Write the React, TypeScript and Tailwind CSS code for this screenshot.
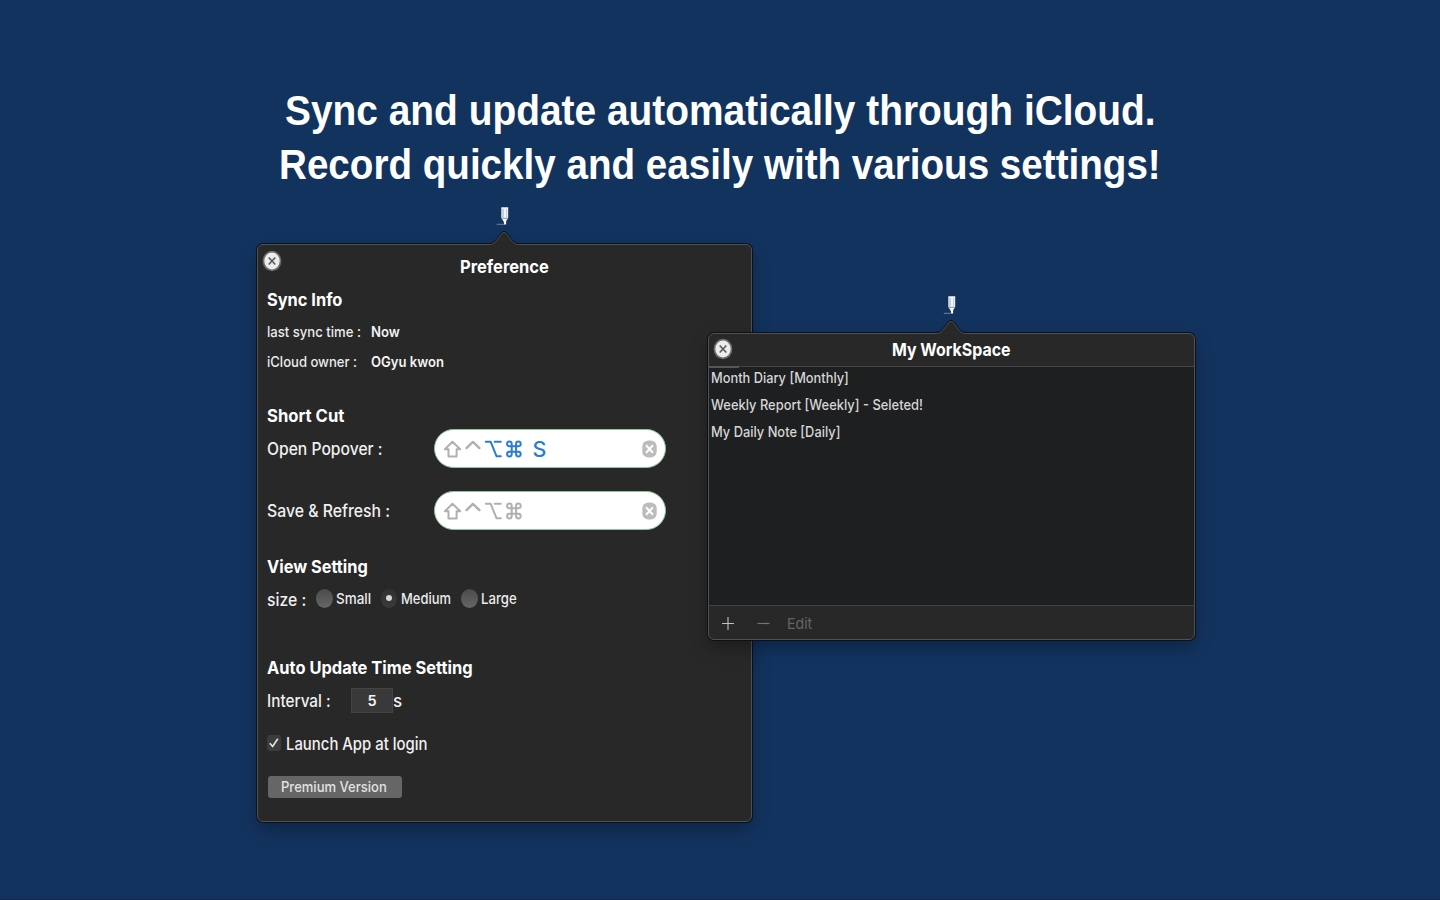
import { useLayoutEffect, useRef, useState } from "react";
import clsx from "clsx";

type FitProps = { children: string; width: number; className?: string };

/* Condenses a line of text so that it spans exactly `width` pixels. */
function Fit({ children, width, className }: FitProps) {
  const ref = useRef<HTMLSpanElement>(null);
  const [scale, setScale] = useState(1);
  useLayoutEffect(() => {
    if (ref.current) setScale(width / ref.current.offsetWidth);
  }, [width, children]);
  return (
    <span className="block shrink-0" style={{ width }}>
      <span
        ref={ref}
        className={clsx("inline-block origin-left whitespace-nowrap align-top", className)}
        style={{ transform: `scaleX(${scale})` }}
      >
        {children}
      </span>
    </span>
  );
}

function Pencil() {
  return (
    <svg className="block" width="14" height="20" viewBox="0 0 14 20">
      <path d="M5.300 1.200h6.900v10.800l-2.300 3.500H7.600L5.300 12z" fill="#f1f4f8" />
      <path d="M7 3v8.500" stroke="#8fa3bd" strokeWidth=".9" />
      <path d="M10.600 3v8.500" stroke="#b4c2d3" strokeWidth=".8" />
      <path d="M5.600 12.300h6.400" stroke="#5f7591" strokeWidth=".7" />
      <path d="M7.700 14.500h2.400v4h-2z" fill="#fff" />
      <path d="M.8 18.300h8" stroke="#8396b2" strokeWidth=".8" />
    </svg>
  );
}

function Arrow() {
  return (
    <svg className="block" width="30" height="16" viewBox="0 0 30 16">
      <path d="M0 14.300C6 14.300 6.500 11 13 3.200Q15 .8 17 3.200C23.500 11 24 14.300 30 14.300V16H0z" fill="#282828" />
      <path d="M0 13.300C5.500 13.300 6.300 10 12.800 2.300Q15 0 17.200 2.300C23.700 10 24.500 13.300 30 13.300" fill="none" stroke="#0b111b" strokeWidth="1" />
      <path d="M0 14.500C6 14.500 6.800 11 13.200 3.300Q15 1.300 16.800 3.300C23.200 11 24 14.500 30 14.500" fill="none" stroke="#484848" strokeWidth="1" />
    </svg>
  );
}

function CloseIcon() {
  return (
    <svg className="block" width="20" height="22" viewBox="0 0 20 22">
      <ellipse cx="10" cy="11" rx="9.400" ry="10.200" fill="#6c6c6c" />
      <ellipse cx="10" cy="11" rx="7.700" ry="8.500" fill="#ececec" />
      <path d="M6.700 7.500l6.600 7M13.300 7.500l-6.600 7" stroke="#5c5c5c" strokeWidth="1.700" />
    </svg>
  );
}

function ShortcutField({ letter }: { letter?: string }) {
  const tone = letter ? "#2a7bd2" : "#b0b0b0";
  return (
    <div className="flex h-[39px] w-[232px] items-center rounded-full border border-[#8cc79a] bg-white pl-[8px] pr-[8px]">
      <svg className="block shrink-0" width="84" height="20" viewBox="0 0 84 20" fill="none" strokeWidth="2" strokeLinejoin="round" strokeLinecap="round">
        <path d="M9.500 2.700L17.200 10.300H13.600V17.400H5.500V10.300H1.900z" stroke="#b0b0b0" />
        <path d="M23.500 9.100L29.900 2.900L36.400 9.100" stroke="#b0b0b0" strokeWidth="2.400" />
        <path d="M42.800 2.700H47.600L53.600 17.300H57.800M51.700 2.700H57.800" stroke={tone} />
        <path d="M68.700 7.300H66.100A2.300 2.400 0 1 1 68.700 4.800V15.200A2.300 2.400 0 1 1 66.100 12.700H75.700A2.300 2.400 0 1 1 73.100 15.200V4.800A2.300 2.400 0 1 1 75.700 7.300z" stroke={tone} />
      </svg>
      <div className="ml-[5.500px] h-6 w-[14px] text-[21.500px] leading-6 text-[#2a7bd2]">
        {letter && <Fit width={14} className="font-medium">{letter}</Fit>}
      </div>
      <svg className="ml-auto block" width="15" height="18" viewBox="0 0 15 18">
        <rect x=".3" y=".5" width="14.400" height="17" rx="6" fill="#bcbcbc" />
        <path d="M4.100 5.300l6.800 7.400M10.900 5.300l-6.800 7.400" stroke="#fff" strokeWidth="2" />
      </svg>
    </div>
  );
}

function Radio({ checked }: { checked?: boolean }) {
  return checked ? (
    <span className="flex h-[19px] w-4 items-center justify-center rounded-[50%] bg-linear-to-b from-[#303030] to-[#3b3b3b]">
      <span className="h-[6px] w-[6px] rounded-full bg-[#d6d6d6]" />
    </span>
  ) : (
    <span className="h-[19px] w-[17px] rounded-[50%] bg-linear-to-b from-[#4b4b4b] to-[#676767]" />
  );
}

const heading = "text-[17.500px] font-bold text-white";
const label = "text-[17px] font-[450] text-[#f0f0f0]";
const small = "text-[14.500px] font-[450] text-[#ededed]";
const value = "text-[14.500px] font-semibold text-[#f4f4f4]";
const option = "text-[15px] font-medium text-[#ebebeb]";

function Preference() {
  return (
    <section className="flex h-[578px] w-[495px] flex-col rounded-md border border-[#505153] bg-[#282828] pl-[9px] shadow-[0_0_0_1px_#0b111b,0_8px_18px_rgba(0,0,0,0.28)]">
      <header className="flex h-[43px] items-center">
        <div className="-ml-[5px] -mt-[11px]"><CloseIcon /></div>
        <div className="-mt-px ml-[177.500px]"><Fit width={89} className="text-[18px] font-bold text-white">Preference</Fit></div>
      </header>
      <div className="flex h-6 items-center"><Fit width={75} className={heading}>Sync Info</Fit></div>
      <div className="mt-1 flex h-[31px] items-center pt-[2px]">
        <div className="w-[104px]"><Fit width={94} className={small}>last sync time :</Fit></div>
        <Fit width={29} className={value}>Now</Fit>
      </div>
      <div className="flex h-[29px] items-center pt-[2px]">
        <div className="w-[104px]"><Fit width={90} className={small}>iCloud owner :</Fit></div>
        <Fit width={73} className={value}>OGyu kwon</Fit>
      </div>

      <div className="mt-[27px] flex h-6 items-center pt-[2px]"><Fit width={77} className={heading}>Short Cut</Fit></div>
      <div className="mt-[2px] flex h-[39px] items-center">
        <div className="w-[167px] pt-[2px]"><Fit width={116} className={label}>Open Popover :</Fit></div>
        <ShortcutField letter="S" />
      </div>
      <div className="mt-[23px] flex h-[39px] items-center">
        <div className="w-[167px] pt-[2px]"><Fit width={123.500} className={label}>Save &amp; Refresh :</Fit></div>
        <ShortcutField />
      </div>

      <div className="mt-[25px] flex h-6 items-center"><Fit width={101} className={heading}>View Setting</Fit></div>
      <div className="mt-[7px] flex h-6 items-center">
        <div className="w-[49px] pt-[6px]"><Fit width={39} className={label}>size :</Fit></div>
        <div className="flex items-center gap-[3px]"><Radio /><div className="pt-[3px]"><Fit width={35} className={option}>Small</Fit></div></div>
        <div className="ml-[9.500px] flex items-center gap-[4px]"><Radio checked /><div className="pt-[3px]"><Fit width={50} className={option}>Medium</Fit></div></div>
        <div className="ml-[10px] flex items-center gap-[3px]"><Radio /><div className="pt-[3px]"><Fit width={36} className={option}>Large</Fit></div></div>
      </div>

      <div className="mt-[45px] flex h-6 items-center pt-[2px]"><Fit width={206} className={heading}>Auto Update Time Setting</Fit></div>
      <div className="mt-[9px] flex h-6 items-center">
        <div className="w-[84px] pt-[3px]"><Fit width={64} className={label}>Interval :</Fit></div>
        <div className="flex h-[25px] w-[42px] items-center justify-center border border-[#434343] bg-[#393939] pt-[3px]">
          <Fit width={9} className={value}>5</Fit>
        </div>
        <div className="pt-[3px]"><Fit width={9} className={label}>s</Fit></div>
      </div>
      <div className="mt-[19px] flex h-6 items-center">
        <div className="flex h-[16px] w-[14px] items-center justify-center rounded-[3px] bg-[#3c3c3c]">
          <svg width="12" height="14" viewBox="0 0 12 14" fill="none" stroke="#e6e6e6" strokeWidth="1.600"><path d="M1.800 7.300L4.600 10.500L9.800 2.700" /></svg>
        </div>
        <div className="ml-[4.500px] pt-[3px]"><Fit width={141} className={label}>Launch App at login</Fit></div>
      </div>
      <button className="ml-[0.500px] mt-[21px] flex h-[22px] w-[134px] items-center justify-center rounded-[3px] bg-[#666666] pr-px pt-[2px]">
        <Fit width={106} className="text-[14.500px] font-[450] text-[#e2e2e2]">Premium Version</Fit>
      </button>
    </section>
  );
}

const notes: { title: string; width: number }[] = [
  { title: "Month Diary [Monthly]", width: 138 },
  { title: "Weekly Report [Weekly] - Seleted!", width: 212 },
  { title: "My Daily Note [Daily]", width: 129.500 },
];

function Workspace() {
  return (
    <section className="flex h-[307px] w-[487px] flex-col overflow-hidden rounded-md border border-[#505153] bg-[#282828] shadow-[0_0_0_1px_#0b111b,0_8px_18px_rgba(0,0,0,0.28)]">
      <header className="flex h-[32px] shrink-0 items-center">
        <div className="-mt-[2px] ml-[4px]"><CloseIcon /></div>
        <div className="-mt-[2px] ml-[159px]"><Fit width={118.500} className="text-[18px] font-bold text-white">My WorkSpace</Fit></div>
      </header>
      <div className="h-px bg-[#444446]"><div className="relative h-[2px] w-[30px] bg-[#565759]" /></div>
      <ul className="grow bg-[#1e1f21] pl-[2px]">
        {notes.map((n) => (
          <li key={n.title} className="flex h-[27px] items-center pb-[4px]">
            <Fit width={n.width} className="text-[14.500px] font-medium text-[#d6d6d6]">{n.title}</Fit>
          </li>
        ))}
      </ul>
      <footer className="flex h-[34px] shrink-0 items-center border-t border-[#444446] pl-[12px]">
        <svg className="mt-[2px] block" width="50" height="15" viewBox="0 0 50 15" fill="none">
          <path d="M1 7.500h12M7 1v13" stroke="#c0c0c0" strokeWidth="1.100" />
          <path d="M36.500 7.500h12" stroke="#737373" strokeWidth="1.200" />
        </svg>
        <div className="ml-[15.500px] pt-[5px]"><Fit width={25.500} className="text-[15px] text-[#646464]">Edit</Fit></div>
      </footer>
    </section>
  );
}

export default function App() {
  return (
    <main className="relative h-[900px] w-[1440px] overflow-hidden border-b border-[#0f284b] bg-[#13335f] font-[Inter,sans-serif]">
      <h1 className="flex flex-col items-center pt-[84px] font-['Liberation_Sans',sans-serif] text-[42.500px] font-bold leading-[53.500px] text-white">
        <Fit width={871}>Sync and update automatically through iCloud.</Fit>
        <Fit width={882}>Record quickly and easily with various settings!</Fit>
      </h1>
      <div className="absolute left-[257px] top-[244px]">
        <Preference />
        <div className="absolute left-[239px] top-[-38px]"><Pencil /></div>
        <div className="absolute left-[232px] top-[-14px]"><Arrow /></div>
      </div>
      <div className="absolute left-[708px] top-[333px]">
        <Workspace />
        <div className="absolute left-[235px] top-[-38px]"><Pencil /></div>
        <div className="absolute left-[228px] top-[-14px]"><Arrow /></div>
      </div>
    </main>
  );
}
